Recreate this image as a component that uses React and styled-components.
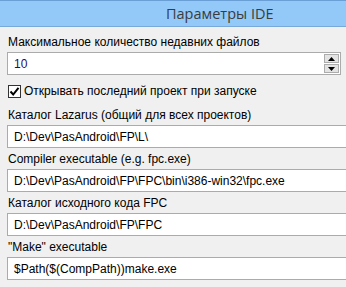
import React from "react";
import styled, { createGlobalStyle } from "styled-components";

const Global = createGlobalStyle`
  html, body { margin: 0; padding: 0; background: #f0f0f0; overflow: hidden; }
  body { font-family: "Liberation Sans", Arial, sans-serif; }
`;

const Page = styled.div`
  width: 346px;
  height: 287px;
  background: #f0f0f0;
  display: flex;
  flex-direction: column;
  overflow: hidden;
`;

const Header = styled.div`
  height: 25px;
  border-top: 1px solid #6a9fd6;
  border-bottom: 1px solid #79a9d9;
  background: #92c9f8;
  display: flex;
  align-items: center;
  padding-left: 166px;
  font-family: "Open Sans", "Liberation Sans", sans-serif;
  font-size: 14.5px;
  color: #3c3c3c;
`;

const Body = styled.div`
  display: flex;
  flex-direction: column;
  padding: 8px 0 0 7px;
`;

const Field = styled.div`
  display: flex;
  flex-direction: column;
  gap: 2px;
  margin-bottom: ${(p) => p.$mb ?? 4}px;
`;

const Label = styled.div`
  font-size: 12px;
  line-height: 15px;
  height: 15px;
  padding-left: 1px;
  color: #000;
  white-space: nowrap;
`;

const Edit = styled.div`
  box-sizing: border-box;
  height: 23px;
  width: ${(p) => p.$w}px;
  background: #fff;
  border: 1px solid #ababab;
  display: flex;
  align-items: center;
  padding-left: 6px;
  font-size: 12px;
  color: ${(p) => p.$color || "#000"};
  white-space: nowrap;
  overflow: hidden;
`;

const SpinText = styled.span`
  flex: 1;
`;

const Spin = styled.div`
  display: flex;
  flex-direction: column;
  gap: 1px;
  margin-right: 1px;
`;

const SpinBtn = styled.div`
  box-sizing: border-box;
  width: 15px;
  height: 9px;
  background: #e3e3e3;
  border: 1px solid #acacac;
  display: flex;
  align-items: center;
  justify-content: center;
`;

const CheckRow = styled.label`
  display: flex;
  align-items: center;
  gap: 3px;
  margin: 9px 0 9px 1px;
  font-size: 12px;
  line-height: 15px;
  color: #000;
  white-space: nowrap;
`;

const Box = styled.span`
  box-sizing: border-box;
  width: 13px;
  height: 13px;
  border: 1px solid #333;
  background: #fff;
  display: flex;
  align-items: center;
  justify-content: center;
`;

const Tri = ({ up }) => (
  <svg width="7" height="4" viewBox="0 0 7 4">
    {up ? <polygon points="0,4 7,4 3.5,0" fill="#000" /> : <polygon points="0,0 7,0 3.5,4" fill="#000" />}
  </svg>
);

const paths = [
  { label: "Каталог Lazarus (общий для всех проектов)", value: "D:\\Dev\\PasAndroid\\FP\\L\\" },
  { label: "Compiler executable (e.g. fpc.exe)", value: "D:\\Dev\\PasAndroid\\FP\\FPC\\bin\\i386-win32\\fpc.exe" },
  { label: "Каталог исходного кода FPC", value: "D:\\Dev\\PasAndroid\\FP\\FPC" },
  { label: "\"Make\" executable", value: "$Path($(CompPath))make.exe" },
];

export default function App() {
  return (
    <Page>
      <Global />
      <Header>Параметры IDE</Header>
      <Body>
        <Field $mb={0}>
          <Label>Максимальное количество недавних файлов</Label>
          <Edit $w={334} $color="#2b0a5c">
            <SpinText>10</SpinText>
            <Spin>
              <SpinBtn><Tri up /></SpinBtn>
              <SpinBtn><Tri /></SpinBtn>
            </Spin>
          </Edit>
        </Field>
        <CheckRow>
          <Box>
            <svg width="11" height="11" viewBox="0 0 11 11">
              <path d="M1.5 5.5 L4.2 8.5 L9.5 1.8" fill="none" stroke="#000" strokeWidth="2" />
            </svg>
          </Box>
          Открывать последний проект при запуске
        </CheckRow>
        {paths.map((p) => (
          <Field key={p.label}>
            <Label>{p.label}</Label>
            <Edit $w={360}>{p.value}</Edit>
          </Field>
        ))}
      </Body>
    </Page>
  );
}
